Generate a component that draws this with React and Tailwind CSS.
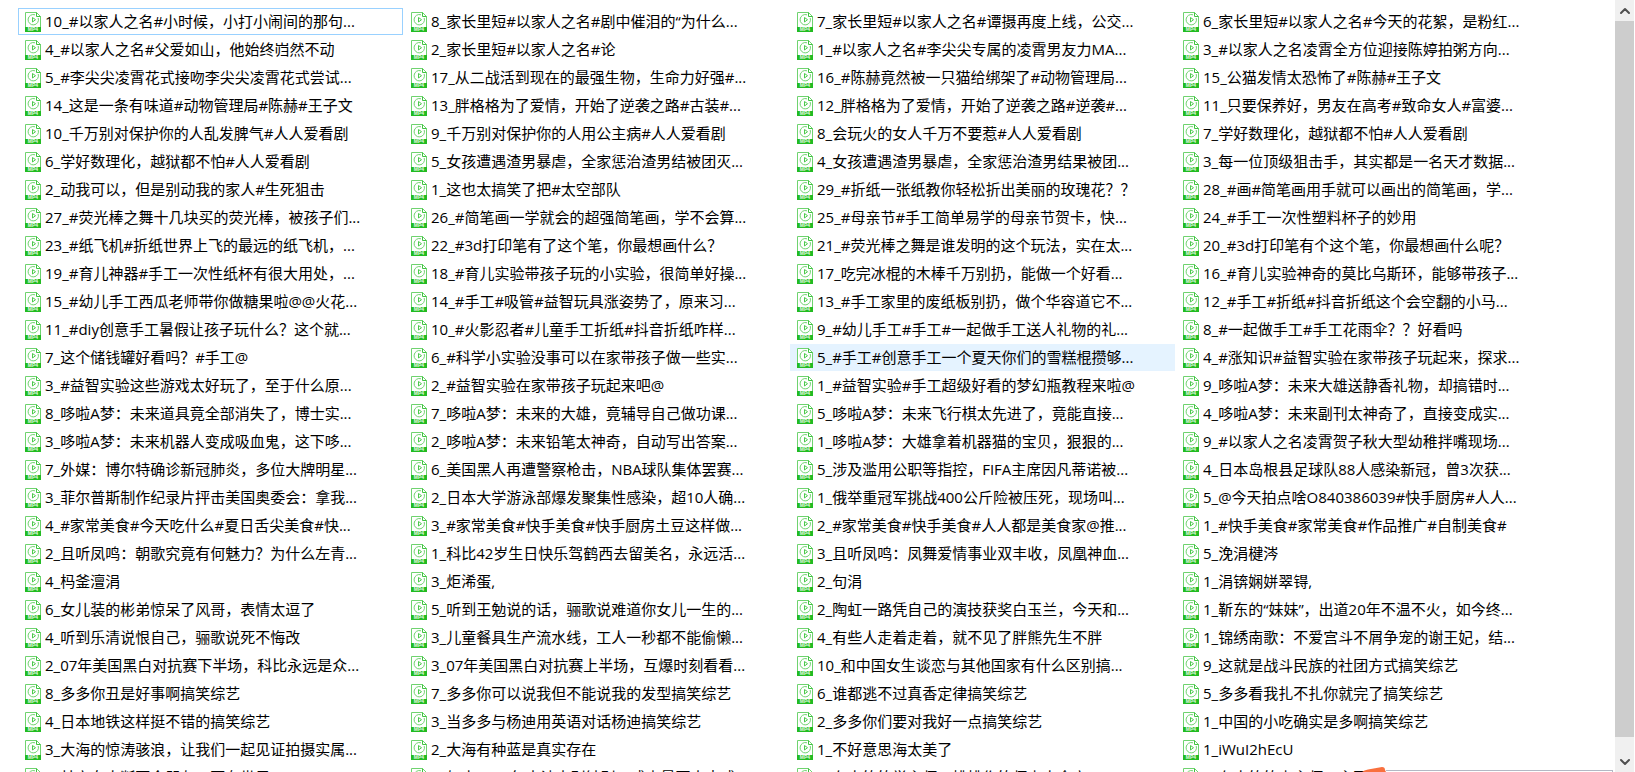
import { ChevronDown, ChevronUp } from 'lucide-react';

const rows = [
  ['10_#以家人之名#小时候，小打小闹间的那句...', '8_家长里短#以家人之名#剧中催泪的“为什么...', '7_家长里短#以家人之名#谭摄再度上线，公交...', '6_家长里短#以家人之名#今天的花絮，是粉红...'],
  ['4_#以家人之名#父爱如山，他始终岿然不动', '2_家长里短#以家人之名#论', '1_#以家人之名#李尖尖专属的凌霄男友力MA...', '3_#以家人之名凌霄全方位迎接陈婷拍粥方向...'],
  ['5_#李尖尖凌霄花式接吻李尖尖凌霄花式尝试...', '17_从二战活到现在的最强生物，生命力好强#...', '16_#陈赫竟然被一只猫给绑架了#动物管理局...', '15_公猫发情太恐怖了#陈赫#王子文'],
  ['14_这是一条有味道#动物管理局#陈赫#王子文', '13_胖格格为了爱情，开始了逆袭之路#古装#...', '12_胖格格为了爱情，开始了逆袭之路#逆袭#...', '11_只要保养好，男友在高考#致命女人#富婆...'],
  ['10_千万别对保护你的人乱发脾气#人人爱看剧', '9_千万别对保护你的人用公主病#人人爱看剧', '8_会玩火的女人千万不要惹#人人爱看剧', '7_学好数理化，越狱都不怕#人人爱看剧'],
  ['6_学好数理化，越狱都不怕#人人爱看剧', '5_女孩遭遇渣男暴虐，全家惩治渣男结被团灭...', '4_女孩遭遇渣男暴虐，全家惩治渣男结果被团...', '3_每一位顶级狙击手，其实都是一名天才数据...'],
  ['2_动我可以，但是别动我的家人#生死狙击', '1_这也太搞笑了把#太空部队', '29_#折纸一张纸教你轻松折出美丽的玫瑰花？？', '28_#画#简笔画用手就可以画出的简笔画，学...'],
  ['27_#荧光棒之舞十几块买的荧光棒，被孩子们...', '26_#简笔画一学就会的超强简笔画，学不会算...', '25_#母亲节#手工简单易学的母亲节贺卡，快...', '24_#手工一次性塑料杯子的妙用'],
  ['23_#纸飞机#折纸世界上飞的最远的纸飞机，...', '22_#3d打印笔有了这个笔，你最想画什么？', '21_#荧光棒之舞是谁发明的这个玩法，实在太...', '20_#3d打印笔有个这个笔，你最想画什么呢？'],
  ['19_#育儿神器#手工一次性纸杯有很大用处，...', '18_#育儿实验带孩子玩的小实验，很简单好操...', '17_吃完冰棍的木棒千万别扔，能做一个好看...', '16_#育儿实验神奇的莫比乌斯环，能够带孩子...'],
  ['15_#幼儿手工西瓜老师带你做糖果啦@@火花...', '14_#手工#吸管#益智玩具涨姿势了，原来习...', '13_#手工家里的废纸板别扔，做个华容道它不...', '12_#手工#折纸#抖音折纸这个会空翻的小马...'],
  ['11_#diy创意手工暑假让孩子玩什么？这个就...', '10_#火影忍者#儿童手工折纸#抖音折纸咋样...', '9_#幼儿手工#手工#一起做手工送人礼物的礼...', '8_#一起做手工#手工花雨伞？？好看吗'],
  ['7_这个储钱罐好看吗？#手工@', '6_#科学小实验没事可以在家带孩子做一些实...', '5_#手工#创意手工一个夏天你们的雪糕棍攒够...', '4_#涨知识#益智实验在家带孩子玩起来，探求...'],
  ['3_#益智实验这些游戏太好玩了，至于什么原...', '2_#益智实验在家带孩子玩起来吧@', '1_#益智实验#手工超级好看的梦幻瓶教程来啦@', '9_哆啦A梦：未来大雄送静香礼物，却搞错时...'],
  ['8_哆啦A梦：未来道具竟全部消失了，博士实...', '7_哆啦A梦：未来的大雄，竟辅导自己做功课...', '5_哆啦A梦：未来飞行棋太先进了，竟能直接...', '4_哆啦A梦：未来副刊太神奇了，直接变成实...'],
  ['3_哆啦A梦：未来机器人变成吸血鬼，这下哆...', '2_哆啦A梦：未来铅笔太神奇，自动写出答案...', '1_哆啦A梦：大雄拿着机器猫的宝贝，狠狠的...', '9_#以家人之名凌霄贺子秋大型幼稚拌嘴现场...'],
  ['7_外媒：博尔特确诊新冠肺炎，多位大牌明星...', '6_美国黑人再遭警察枪击，NBA球队集体罢赛...', '5_涉及滥用公职等指控，FIFA主席因凡蒂诺被...', '4_日本岛根县足球队88人感染新冠，曾3次获...'],
  ['3_菲尔普斯制作纪录片抨击美国奥委会：拿我...', '2_日本大学游泳部爆发聚集性感染，超10人确...', '1_俄举重冠军挑战400公斤险被压死，现场叫...', '5_@今天拍点啥O840386039#快手厨房#人人...'],
  ['4_#家常美食#今天吃什么#夏日舌尖美食#快...', '3_#家常美食#快手美食#快手厨房土豆这样做...', '2_#家常美食#快手美食#人人都是美食家@推...', '1_#快手美食#家常美食#作品推广#自制美食#'],
  ['2_且听凤鸣：朝歌究竟有何魅力？为什么左青...', '1_科比42岁生日快乐驾鹤西去留美名，永远活...', '3_且听凤鸣：凤舞爱情事业双丰收，凤凰神血...', '5_浼涓楗涔'],
  ['4_杩釜澶涓', '3_炬浠蛋,', '2_句涓', '1_涓锛娴姘翠锝,'],
  ['6_女儿装的彬弟惊呆了风哥，表情太逗了', '5_听到王勉说的话，骊歌说难道你女儿一生的...', '2_陶虹一路凭自己的演技获奖白玉兰，今天和...', '1_靳东的“妹妹”，出道20年不温不火，如今终...'],
  ['4_听到乐清说恨自己，骊歌说死不悔改', '3_儿童餐具生产流水线，工人一秒都不能偷懒...', '4_有些人走着走着，就不见了胖熊先生不胖', '1_锦绣南歌：不爱宫斗不屑争宠的谢王妃，结...'],
  ['2_07年美国黑白对抗赛下半场，科比永远是众...', '3_07年美国黑白对抗赛上半场，互爆时刻看看...', '10_和中国女生谈恋与其他国家有什么区别搞...', '9_这就是战斗民族的社团方式搞笑综艺'],
  ['8_多多你丑是好事啊搞笑综艺', '7_多多你可以说我但不能说我的发型搞笑综艺', '6_谁都逃不过真香定律搞笑综艺', '5_多多看我扎不扎你就完了搞笑综艺'],
  ['4_日本地铁这样挺不错的搞笑综艺', '3_当多多与杨迪用英语对话杨迪搞笑综艺', '2_多多你们要对我好一点搞笑综艺', '1_中国的小吃确实是多啊搞笑综艺'],
  ['3_大海的惊涛骇浪，让我们一起见证拍摄实属...', '2_大海有种蓝是真实存在', '1_不好意思海太美了', '1_iWuI2hEcU'],
  ['1_甘家女人断更全朋友，更有世界', '2_如来2020年古诗大别针别，感李最更大吉感...', '1_在古竹竹学主师，排排作竹师点大食享，20...', '1_在古竹竹点主师，主更'],
];

const focusedFile = rows[0][0];
const hoveredFile = rows[12][2];

const Mp4Icon = () => (
  <svg className="h-5 w-4 shrink-0" viewBox="0 0 16 20" fill="none" aria-hidden="true">
    <path d="M.5 19.5V.5H11.5L15.5 4.5V19.5Z" fill="#fff" stroke="#6fd36f" />
    <path d="M11.5 .5V4.5H15.5" stroke="#3fc43f" />
    <path d="M13.2 6A5.2 5.2 0 1 1 10 2.8" stroke="#6fd36f" />
    <path d="M7.5 5.5L10.5 7.7L7.5 10Z" stroke="#4cc94c" strokeLinejoin="round" />
    <rect y="15" width="16" height="5" fill="#22bb22" />
    <text x="8" y="19" textAnchor="middle" fontSize="5" fontWeight="700" fill="#e4f8e4" fontFamily="Liberation Sans, sans-serif">
      MP4
    </text>
  </svg>
);

const FileItem = ({ name }) => {
  let state = 'border-transparent';
  if (name === focusedFile) state = 'border-[#99d1ff]';
  if (name === hoveredFile) state = 'border-[#e5f3ff] bg-[#e5f3ff]';

  return (
    <li className={`flex h-[27px] min-w-0 items-center gap-1 border px-1.5 ${state}`}>
      <Mp4Icon />
      <span className="overflow-hidden whitespace-nowrap">{name}</span>
    </li>
  );
};

const ScrollBar = () => (
  <div className="flex w-5 shrink-0 flex-col border-r border-white bg-[#f0f0f0] text-[#505050]">
    <button type="button" aria-label="Scroll up" className="flex h-[21px] items-center justify-center">
      <ChevronUp className="size-4" strokeWidth={3} />
    </button>
    <div className="flex-1 bg-[#cdcdcd]"></div>
    <button type="button" aria-label="Scroll down" className="flex h-[35px] items-end justify-center pb-0.5">
      <ChevronDown className="size-4" strokeWidth={3} />
    </button>
  </div>
);

const App = () => {
  return (
    <div className="relative flex h-screen overflow-hidden bg-white font-['Open_Sans','Noto_Sans_CJK_SC',sans-serif] text-[15px] leading-[25px] text-black">
      <main className="min-w-0 flex-1 overflow-hidden pt-2 pr-[54px] pl-[18px]">
        <ul className="grid grid-cols-4 gap-px" lang="zh-CN">
          {rows.flat().map((name, index) => (
            <FileItem key={index} name={name} />
          ))}
        </ul>
      </main>
      <ScrollBar />

      {/* top edge of the floating input bar */}
      <div className="absolute right-[22px] bottom-0 h-0.5 w-[227px] border-t border-r border-[#b4b8c4] bg-white"></div>
      <svg className="absolute right-[249px] bottom-0 h-[5px] w-6" viewBox="0 0 24 5" aria-hidden="true">
        <path d="M0 5Q2 3 6 2.5L20 0Q23 0 23 3L24 5Z" fill="#f9703e" />
      </svg>
    </div>
  );
};

export default App;
